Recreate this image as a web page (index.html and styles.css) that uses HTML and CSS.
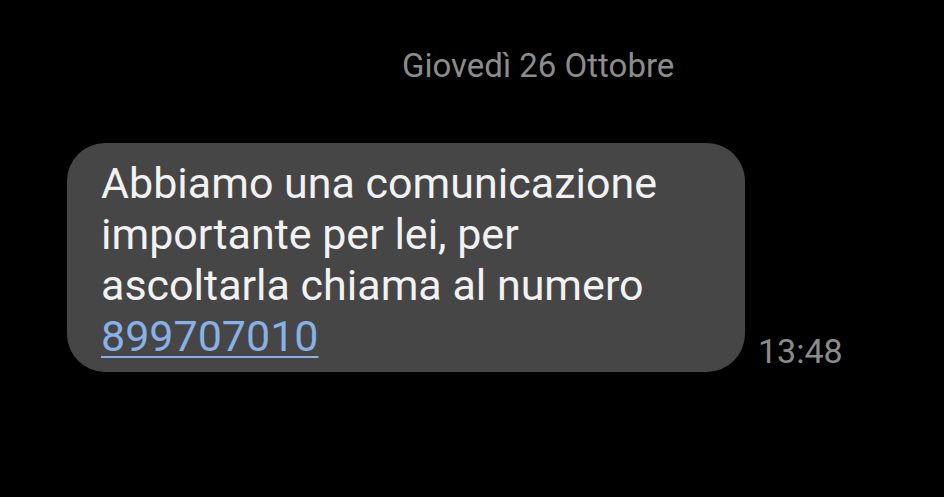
FILE: index.html
```html
<!DOCTYPE html>
<html lang="it">
<head>
<meta charset="utf-8">
<link rel="stylesheet" href="styles.css">
</head>
<body>
<main class="thread">
  <div class="date">Giovedì 26 Ottobre</div>
  <div class="msg-row">
    <div class="bubble">Abbiamo una comunicazione importante per lei, per ascoltarla chiama al numero <a class="num" href="#">899707010</a></div>
    <div class="time">13:48</div>
  </div>
</main>
</body>
</html>
```
FILE: styles.css
```css
html, body {
  margin: 0;
  padding: 0;
  background: #000;
  height: 100%;
}
.thread {
  display: flex;
  flex-direction: column;
  font-family: Roboto, "Noto Sans", sans-serif;
  padding-top: 46px;
}
.date {
  color: #8c8c8c;
  font-size: 33px;
  line-height: 40px;
  padding-left: 402px;
}
.msg-row {
  display: flex;
  align-items: flex-end;
  margin-top: 57px;
  padding-left: 67px;
}
.bubble {
  box-sizing: border-box;
  width: 678px;
  height: 229px;
  background: #464646;
  border-radius: 38px;
  color: #f2f2f2;
  font-size: 43px;
  line-height: 51px;
  padding: 15px 40px 10px 34px;
}
.num {
  color: #88b1e8;
  text-decoration: underline;
  text-decoration-thickness: 2px;
  text-underline-offset: 5px;
}
.time {
  color: #8c8c8c;
  font-size: 34px;
  line-height: 40px;
  margin-left: 13px;
  margin-bottom: 1px;
}
```
